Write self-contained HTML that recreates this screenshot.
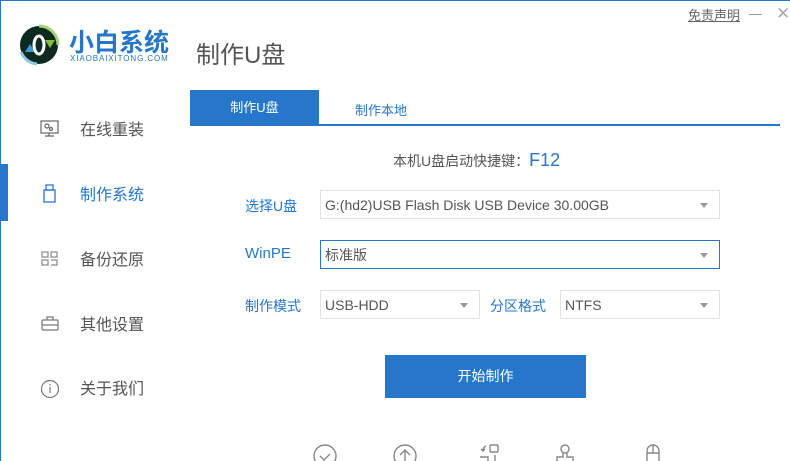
<!DOCTYPE html>
<html><head><meta charset="utf-8"><style>
*{margin:0;padding:0;box-sizing:border-box}
body{width:790px;height:461px;overflow:hidden;background:#fff;font-family:"Liberation Sans","Noto Sans CJK SC",sans-serif;position:relative;color:#555}
.a{position:absolute;white-space:nowrap}
.sel{position:absolute;height:29px;border:1px solid #e3e3e3;font-size:14px;color:#555;padding-left:4px;line-height:29px}
.sel:after{content:"";position:absolute;right:11px;top:12px;border-left:4px solid transparent;border-right:4px solid transparent;border-top:5px solid #999}
.lbl{position:absolute;font-size:14px;color:#2677c9}
.nav{position:absolute;left:80px;font-size:16px;color:#555}
</style></head><body>
<div class="a" style="left:0;top:0;width:790px;height:1px;background:#2677c9"></div>
<div class="a" style="left:0;top:0;width:1px;height:461px;background:#2677c9"></div>
<div class="a" style="left:0;top:164px;width:8px;height:57px;background:#2677c9"></div>
<svg class="a" style="left:17px;top:22px" width="46" height="46" viewBox="0 0 46 46">
<circle cx="22" cy="23" r="19" fill="#0d2a20"/>
<path d="M22 4a19 19 0 0 1 19 19" stroke="#a8d27a" stroke-width="3" fill="none"/>
<path d="M4 30a19 19 0 0 0 16 12" stroke="#8cc9e0" stroke-width="3" fill="none"/>
<path d="M28 18h10l-5 8z" fill="#7fc040"/>
<path d="M8 30h10l-5-8z" fill="#3a9ad8"/>
<ellipse cx="22" cy="23" rx="5" ry="9" fill="none" stroke="#fff" stroke-width="3"/>
</svg>
<div class="a" style="left:69px;top:23px;font-size:25px;color:#2677c9;font-weight:bold">小白系统</div>
<div class="a" style="left:70px;top:54px;font-size:8px;color:#2677c9;letter-spacing:0.9px">XIAOBAIXITONG.COM</div>
<div class="a" style="left:196px;top:35px;font-size:24px;color:#555">制作U盘</div>
<div class="a" style="left:688px;top:5px;font-size:13px;color:#666;text-decoration:underline">免责声明</div>
<div class="a" style="left:749px;top:14px;width:13px;height:1px;background:#999"></div>
<div class="a" style="left:776px;top:4px;font-size:17px;color:#aaa">✕</div>
<svg class="a" style="left:40px;top:120px" width="20" height="18" viewBox="0 0 20 18" fill="none" stroke="#666" stroke-width="1.2"><rect x="1" y="1" width="17" height="12"/><path d="M9 13v3M5 16h9"/><circle cx="7" cy="6" r="2"/><circle cx="11" cy="9" r="1.5"/></svg>
<div class="nav" style="top:116px">在线重装</div>
<svg class="a" style="left:43px;top:184px" width="14" height="20" viewBox="0 0 14 20" fill="none" stroke="#2677c9" stroke-width="1.3"><rect x="3" y="1" width="7" height="5"/><rect x="1" y="6" width="11" height="12"/></svg>
<div class="nav" style="top:181px;color:#2677c9">制作系统</div>
<svg class="a" style="left:41px;top:251px" width="18" height="16" viewBox="0 0 18 16" fill="none" stroke="#888" stroke-width="1.2"><rect x="1" y="1" width="6" height="5"/><rect x="10" y="1" width="6" height="5"/><rect x="1" y="9" width="6" height="5"/><path d="M10 9h6v5h-6"/></svg>
<div class="nav" style="top:246px">备份还原</div>
<svg class="a" style="left:41px;top:316px" width="18" height="16" viewBox="0 0 18 16" fill="none" stroke="#777" stroke-width="1.2"><rect x="1" y="4" width="16" height="10" rx="1"/><path d="M6 4V1h6v3M1 9h16"/></svg>
<div class="nav" style="top:311px">其他设置</div>
<svg class="a" style="left:40px;top:379px" width="20" height="20" viewBox="0 0 20 20" fill="none" stroke="#777" stroke-width="1.2"><circle cx="10" cy="10" r="8.5"/><path d="M10 8v6M10 5v1.5"/></svg>
<div class="nav" style="top:375px">关于我们</div>
<div class="a" style="left:190px;top:90px;width:129px;height:35px;background:#2677c9;color:#fff;font-size:13px;text-align:center;line-height:35px">制作U盘</div>
<div class="a" style="left:355px;top:100px;font-size:13px;color:#2677c9">制作本地</div>
<div class="a" style="left:190px;top:124px;width:590px;height:2px;background:#2677c9"></div>
<div class="a" style="left:393px;top:150px;font-size:14px;color:#555">本机U盘启动快捷键：<span style="color:#2677c9;font-size:18px">F12</span></div>
<div class="lbl" style="left:245px;top:196px">选择U盘</div>
<div class="sel" style="left:320px;top:190px;width:400px">G:(hd2)USB Flash Disk USB Device 30.00GB</div>
<div class="lbl" style="left:245px;top:245px;font-size:15px">WinPE</div>
<div class="sel" style="left:320px;top:240px;width:400px;border-color:#2677c9">标准版</div>
<div class="lbl" style="left:245px;top:296px">制作模式</div>
<div class="sel" style="left:320px;top:290px;width:160px">USB-HDD</div>
<div class="lbl" style="left:490px;top:296px">分区格式</div>
<div class="sel" style="left:560px;top:290px;width:160px">NTFS</div>
<div class="a" style="left:385px;top:355px;width:201px;height:43px;background:#2677c9;color:#fff;font-size:14px;text-align:center;line-height:43px">开始制作</div>
<svg class="a" style="left:313px;top:443px" width="360" height="18" viewBox="0 0 360 18" fill="none" stroke="#888" stroke-width="1.4">
<circle cx="12" cy="13" r="11"/><path d="M7 13l4 4 6-6"/>
<circle cx="92" cy="13" r="11"/><path d="M92 20V8M87 12l5-5 5 5"/>
<rect x="177" y="2" width="8" height="7" rx="1"/><path d="M173 3q-3 1-3 5M168 6l2 2 2-2M167 14h8v4M182 12v6"/>
<circle cx="252" cy="6" r="4"/><path d="M250 10v4h-6v4M254 10v4h6v4"/>
<path d="M334 18V8a6 6 0 0 1 12 0v10M334 10h12M340 2v8"/>
</svg>
</body></html>
